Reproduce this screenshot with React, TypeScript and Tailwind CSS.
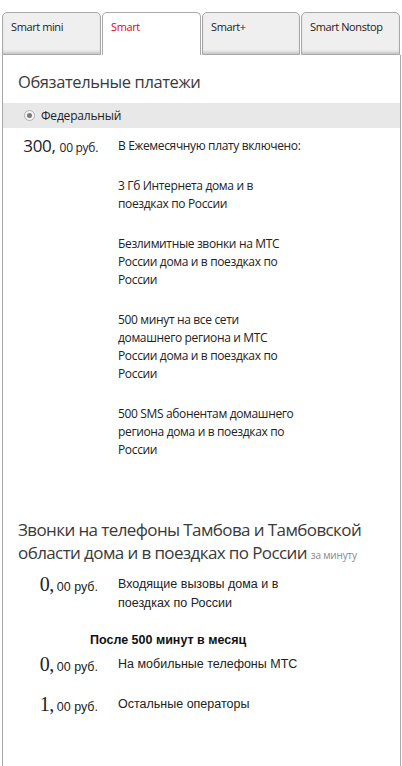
import React from "react";

const sans = { fontFamily: '"Open Sans", "Noto Sans", sans-serif' };

function Tab({ label, active }: { label: string; active?: boolean }) {
  return (
    <div
      className={
        "h-[43px] rounded-t-[5px] border border-[#a8a8a8] pl-[8px] pt-[6px] text-[11px] tracking-[-0.4px] " +
        (active
          ? "border-b-0 bg-white text-[#e30613]"
          : "bg-[#efefef] text-[#222] shadow-[inset_0_-3px_3px_-1px_rgba(0,0,0,0.18)]")
      }
      style={sans}
    >
      {label}
    </div>
  );
}

function UpperPrice({ whole }: { whole: string }) {
  return (
    <div className="flex w-[95px] items-baseline justify-end tracking-[-0.3px]" style={sans}>
      <span className="text-[17px] leading-[18px] text-[#222]">{whole},</span>
      <span className="ml-[4px] text-[12px] text-[#222]">00 руб.</span>
    </div>
  );
}

function LowerPrice({ whole }: { whole: string }) {
  return (
    <div className="flex w-[95px] items-baseline justify-end">
      <span
        className="text-[20px] leading-[19px] tracking-[-0.5px] text-[#222]"
        style={{ fontFamily: '"Liberation Serif", serif' }}
      >
        {whole},
      </span>
      <span
        className="ml-[3px] text-[12.5px] text-[#222]"
        style={{ fontFamily: '"Liberation Sans", Arial, sans-serif' }}
      >
        00 руб.
      </span>
    </div>
  );
}

export default function App() {
  const items = [
    ["3 Гб Интернета дома и в", "поездках по России"],
    ["Безлимитные звонки на МТС", "России дома и в поездках по", "России"],
    ["500 минут на все сети", "домашнего региона и МТС", "России дома и в поездках по", "России"],
    ["500 SMS абонентам домашнего", "региона дома и в поездках по", "России"],
  ];
  const lowerText = { fontFamily: '"Liberation Sans", Arial, sans-serif' };
  return (
    <div className="min-h-[766px] w-[402px] bg-white pt-[12px]">
      <div className="ml-[2px] grid w-[399px] grid-cols-[99px_99px_98px_99px] gap-x-[1px]">
        <Tab label="Smart mini" />
        <Tab label="Smart" active />
        <Tab label="Smart+" />
        <Tab label="Smart Nonstop" />
      </div>
      <div className="ml-[2px] min-h-[711px] w-[399px] border-x border-[#a8a8a8] pb-[40px]">
        <div
          className="pl-[15px] pt-[15px] text-[16.5px] leading-[24px] tracking-[-0.4px] text-[#3a3a3a]"
          style={sans}
        >
          Обязательные платежи
        </div>
        <div className="mt-[9px] flex h-[25px] items-center bg-[#e8e8e8] pl-[21px]">
          <div className="flex h-[11px] w-[11px] items-center justify-center rounded-full border border-[#b0b0b0] bg-[#f4f4f4]">
            <div className="h-[5px] w-[5px] rounded-full bg-[#7a7a7a]" />
          </div>
          <span className="ml-[6px] text-[12px] tracking-[-0.2px] text-[#222]" style={sans}>
            Федеральный
          </span>
        </div>
        <div className="mt-[9px] flex">
          <UpperPrice whole="300" />
          <div className="ml-[20px] text-[12px] leading-[18px] tracking-[-0.35px] text-[#222]" style={sans}>
            <div>В Ежемесячную плату включено:</div>
            {items.map((lines, i) => (
              <div key={i} className="mt-[22px]">
                {lines.map((l, j) => (
                  <div key={j}>{l}</div>
                ))}
              </div>
            ))}
          </div>
        </div>
        <div
          className="mt-[59px] pl-[15px] text-[17px] leading-[23px] tracking-[-0.6px] text-[#3a3a3a]"
          style={sans}
        >
          Звонки на телефоны Тамбова и Тамбовской
          <br />
          области дома и в поездках по России{" "}
          <span className="text-[10px] tracking-[-0.2px] text-[#888]">за минуту</span>
        </div>
        <div className="mt-[8px] flex">
          <LowerPrice whole="0" />
          <div className="ml-[20px] text-[12.5px] leading-[19px] text-[#222]" style={lowerText}>
            <div>Входящие вызовы дома и в</div>
            <div>поездках по России</div>
          </div>
        </div>
        <div
          className="mt-[18px] pl-[87px] text-[12.5px] font-bold leading-[18px] text-[#111]"
          style={lowerText}
        >
          После 500 минут в месяц
        </div>
        <div className="mt-[6px] flex">
          <LowerPrice whole="0" />
          <div className="ml-[20px] text-[12.5px] leading-[19px] text-[#222]" style={lowerText}>
            На мобильные телефоны МТС
          </div>
        </div>
        <div className="mt-[18px] flex">
          <LowerPrice whole="1" />
          <div className="ml-[20px] text-[12.5px] leading-[19px] text-[#222]" style={lowerText}>
            Остальные операторы
          </div>
        </div>
      </div>
    </div>
  );
}
